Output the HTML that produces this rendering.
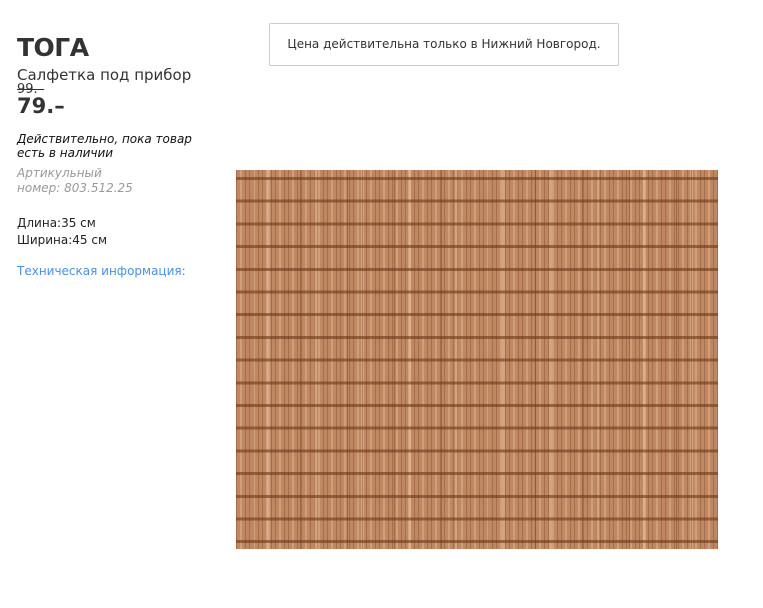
<!DOCTYPE html>
<html><head><meta charset="utf-8"><style>
body{margin:0;width:763px;height:608px;background:#fff;font-family:"DejaVu Sans","Liberation Sans",sans-serif;color:#333;position:relative;overflow:hidden}
.a{position:absolute;white-space:nowrap}
h1{position:absolute;left:17px;top:33px;margin:0;font:bold 25px "DejaVu Sans",sans-serif;color:#333;letter-spacing:-0.5px}
.box{position:absolute;left:269px;top:23px;width:350px;height:43px;border:1px solid #ccc;border-radius:2px;box-sizing:border-box;font-size:12px;color:#333;text-align:center;line-height:41px}
.mat{position:absolute;left:236px;top:170px;width:482px;height:379px;
background:
repeating-linear-gradient(180deg,transparent 0 7px,rgba(110,55,25,.6) 7px 10px,transparent 10px 22.7px),
repeating-linear-gradient(90deg,rgba(120,60,30,.35) 0 1px,transparent 1px 4px,rgba(240,200,160,.35) 4px 6px,transparent 6px 9px,rgba(100,50,25,.3) 9px 10px,transparent 10px 13px),
repeating-linear-gradient(90deg,transparent 0 17px,rgba(90,45,20,.35) 17px 18px,transparent 18px 31px,rgba(255,230,200,.3) 31px 34px,transparent 34px 47px),
#bf8862}
</style></head><body>
<h1>ТОГА</h1>
<div class="a" style="left:17px;top:66px;font-size:15px">Салфетка под прибор</div>
<div class="a" style="left:17px;top:82px;font-size:13px;text-decoration:line-through">99.–</div>
<div class="a" style="left:17px;top:94px;font-size:21px;font-weight:bold">79.–</div>
<div class="a" style="left:17px;top:132px;font-size:12px;font-style:italic;color:#111;line-height:14px">Действительно, пока товар<br>есть в наличии</div>
<div class="a" style="left:17px;top:166px;font-size:12px;font-style:italic;color:#999;line-height:15px">Артикульный<br>номер: 803.512.25</div>
<div class="a" style="left:17px;top:215px;font-size:12px;color:#222;line-height:17px">Длина:35 см<br>Ширина:45 см</div>
<div class="a" style="left:17px;top:264px;font-size:12px;color:#4a90e2">Техническая информация:</div>
<div class="box">Цена действительна только в Нижний Новгород.</div>
<div class="mat"></div>
</body></html>
